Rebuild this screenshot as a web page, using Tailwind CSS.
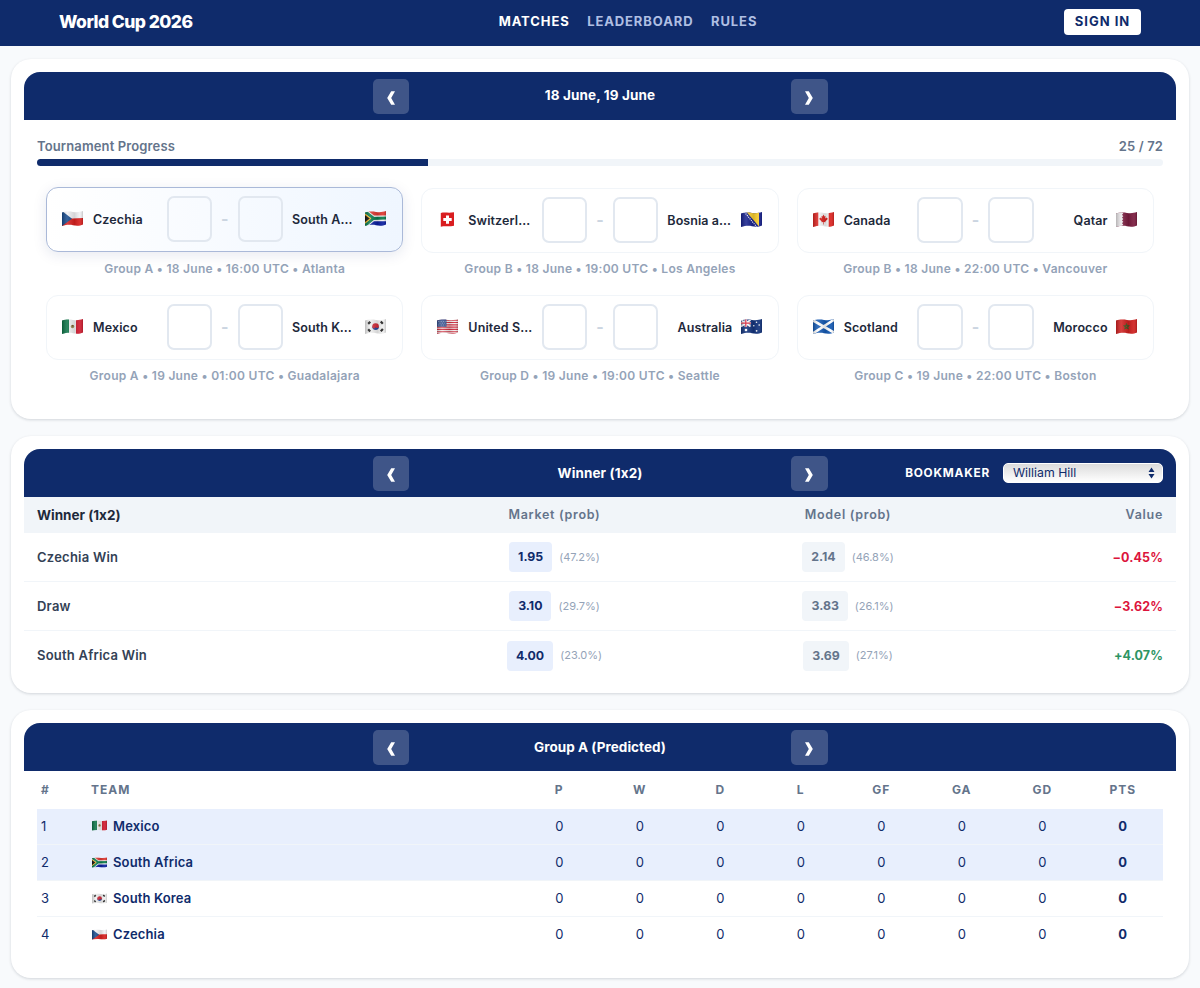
<!DOCTYPE html>
<html lang="en">
<head>
    <meta charset="utf-8"/>
    <meta content="width=device-width, initial-scale=1.0" name="viewport"/>
    <title>World Cup 2026</title>
    <script src="https://cdn.jsdelivr.net/npm/@tailwindcss/browser@4"></script>
</head>
<body class="bg-[#f8fafc] text-[#0f2b6b] font-['Inter',sans-serif] [font-feature-settings:'calt'_0] h-[988px] overflow-hidden">
    <!-- Flags and icons -->
    <svg class="absolute w-0 h-0">
        <defs>
            <clipPath id="wave"><path d="M0 1.600C4 .2 7 .3 11 .9S18 1 21 0V13.400C18 14.800 15 15 11 14.200S4 14 0 15Z"/></clipPath>
            <linearGradient id="shade">
                <stop offset="0" stop-color="#000" stop-opacity=".22"/>
                <stop offset=".25" stop-color="#fff" stop-opacity=".14"/>
                <stop offset=".6" stop-color="#000" stop-opacity=".12"/>
                <stop offset=".85" stop-color="#fff" stop-opacity=".08"/>
                <stop offset="1" stop-color="#000" stop-opacity=".18"/>
            </linearGradient>
        </defs>
        <symbol id="cz" viewBox="0 0 21 15"><g clip-path="url(#wave)"><path fill="#f1f1f4" d="M0 0h21v8H0z"/><path fill="#d8201f" d="M0 8c8 0 13-1 21-1v8H0z"/><path fill="#174a8c" d="M0 0l10 7.8L0 15z"/><path fill="url(#shade)" d="M0 0h21v15H0z"/></g></symbol>
        <symbol id="za" viewBox="0 0 21 15"><g clip-path="url(#wave)"><path fill="#f4f4f4" d="M0 0h21v15H0z"/><path fill="#de3831" d="M3 0h18v4.4H9z"/><path fill="#0a1fa0" d="M3 15h18v-4.8H9z"/><path fill="none" stroke="#087a4b" stroke-width="3" d="M0 .5l8.5 6.8L0 14.500M8 7.400L21 7"/><path fill="#ffb612" d="M0 2.800l6.300 4.700L0 12.400z"/><path fill="#111" d="M0 4.200l4.800 3.300L0 11z"/><path fill="url(#shade)" d="M0 0h21v15H0z"/></g></symbol>
        <symbol id="mx" viewBox="0 0 21 15"><g clip-path="url(#wave)"><path fill="#f2f2f2" d="M0 0h21v15H0z"/><path fill="#0b7346" d="M0 0h7v15H0z"/><path fill="#d01c30" d="M14 0h7v15h-7z"/><circle cx="10.5" cy="7.5" r="1.7" fill="#9a8a55"/><circle cx="10.7" cy="6.8" r=".8" fill="#6f4b24"/><path fill="url(#shade)" d="M0 0h21v15H0z"/></g></symbol>
        <symbol id="kr" viewBox="0 0 21 15"><g clip-path="url(#wave)"><path fill="#f1f1f1" d="M0 0h21v15H0z"/><path fill="#24479c" d="M7.200 7.500a3.400 3.400 0 0 0 6.800 0z"/><path fill="#d22e3c" d="M7.200 8a3.400 3.400 0 0 1 6.800-.5 1.800 1.800 0 0 1-3.300.6A1.800 1.800 0 0 1 7.200 8z"/><path stroke="#222" stroke-width="2.2" d="M3.200 4.900l2.100-2.100M15.800 2.500l2 2.200M3.200 10.200l2 2.200M15.800 12.300l2.100-2.200"/><path fill="url(#shade)" d="M0 0h21v15H0z"/></g></symbol>
        <symbol id="ch" viewBox="0 0 21 15"><path fill="#d91d20" d="M3.800.9C8 0 12 1.300 17 .2v13.500C12 15 8 13.700 3.800 14.800z"/><path fill="#fff" d="M9 3.400h3v2.700h2.700v3H12v2.700H9V9.100H6.300v-3H9z"/></symbol>
        <symbol id="ba" viewBox="0 0 21 15"><g clip-path="url(#wave)"><path fill="#16208c" d="M0 0h21v15H0z"/><path fill="#f7cd2e" d="M5.500 0H18v14.500z"/><path stroke="#fff" stroke-width="1.1" stroke-dasharray="1.1 1" d="M3.300 0l12.500 15"/><path fill="url(#shade)" d="M0 0h21v15H0z"/></g></symbol>
        <symbol id="ca" viewBox="0 0 21 15"><g clip-path="url(#wave)"><path fill="#f6f6f6" d="M0 0h21v15H0z"/><path fill="#dc2420" d="M0 0h5.300v15H0zM15.700 0H21v15h-5.300zM10.500 2.600l1 1.800 1-.4-.3 2.400 1.700-1 .9 1.600-2.500 2.400.2.800-1.700-.1v2.300h-.6v-2.300l-1.700.1.200-.8-2.500-2.400.9-1.600 1.700 1L8.500 4l1 .4z"/><path fill="url(#shade)" d="M0 0h21v15H0z"/></g></symbol>
        <symbol id="qa" viewBox="0 0 21 15"><g clip-path="url(#wave)"><path fill="#7b1c3f" d="M0 0h21v15H0z"/><path fill="#e9e6e8" d="M0 0h6l1.300 1.400L6 2.800l1.300 1.400L6 5.600 7.300 7 6 8.400l1.300 1.400L6 11.200l1.300 1.400L6 14l1 1H0z"/><path fill="url(#shade)" d="M0 0h21v15H0z"/></g></symbol>
        <symbol id="us" viewBox="0 0 21 15"><g clip-path="url(#wave)"><path fill="#f4eded" d="M0 0h21v15H0z"/><path stroke="#cf2b3d" stroke-width="1.15" d="M0 1.200h21M0 3.500h21M0 5.800h21M0 8.100h21M0 10.400h21M0 12.700h21M0 14.700h21"/><path fill="#35508f" d="M0 0h9.500v7.800H0z"/><path stroke="#c5cfe4" stroke-width=".7" stroke-dasharray=".7 1" d="M1 2.500h8M1.800 4.200h7M1 6h8"/><path fill="url(#shade)" d="M0 0h21v15H0z"/></g></symbol>
        <symbol id="au" viewBox="0 0 21 15"><g clip-path="url(#wave)"><path fill="#12337c" d="M0 0h21v15H0z"/><path stroke="#fff" stroke-width="1.8" d="M0 1l9.500 6.500M9.500 1L0 7.500"/><path stroke="#fff" stroke-width="2.6" d="M4.800 0v7.800M0 4.200h9.800"/><path stroke="#d9243a" stroke-width="1.3" d="M4.800 0v7.800M0 4.200h9.800"/><g fill="#fff"><circle cx="5" cy="11" r="1.3"/><circle cx="15.5" cy="3.2" r=".8"/><circle cx="12.8" cy="6.8" r=".8"/><circle cx="18.2" cy="6" r=".8"/><circle cx="15.6" cy="11.8" r=".9"/></g><path fill="url(#shade)" d="M0 0h21v15H0z"/></g></symbol>
        <symbol id="sc" viewBox="0 0 21 15"><g clip-path="url(#wave)"><path fill="#1459b3" d="M0 0h21v15H0z"/><path stroke="#fff" stroke-width="2.6" d="M0 1.500l21 12M21 .8L0 14.300"/><path fill="url(#shade)" d="M0 0h21v15H0z"/></g></symbol>
        <symbol id="ma" viewBox="0 0 21 15"><g clip-path="url(#wave)"><path fill="#d0201f" d="M0 0h21v15H0z"/><path fill="none" stroke="#3c5c22" stroke-width=".9" d="M10.500 4.600l1.800 5.500-4.700-3.400h5.800l-4.700 3.400z"/><path fill="url(#shade)" d="M0 0h21v15H0z"/></g></symbol>
        <symbol id="prev" viewBox="0 0 8 14"><path d="M4.200.3H8L4.200 7 8 13.700H4.200L.2 7z"/></symbol>
        <symbol id="next" viewBox="0 0 8 14"><path d="M3.800.3H0L3.800 7 0 13.700h3.800L7.800 7z"/></symbol>
    </svg>

    <header class="bg-[#0f2b6b] h-[45.5px] pl-[59px] pr-[59px] grid grid-cols-[1fr_auto_1fr] items-center text-white">
        <h1 class="text-[17.5px] font-extrabold tracking-[-0.55px] -translate-y-px">World Cup 2026</h1>
        <nav class="-translate-y-px translate-x-[28px]">
            <ul class="flex gap-[17.5px] text-[13px] font-bold tracking-[0.9px] text-[#afbfe3]">
                <li><a class="text-white" href="#">MATCHES</a></li>
                <li><a href="#">LEADERBOARD</a></li>
                <li><a href="#">RULES</a></li>
            </ul>
        </nav>
        <button class="justify-self-end bg-white text-[#0f2b6b] rounded h-[26px] w-[77px] -translate-y-px text-[13px] font-bold tracking-[1px]">SIGN IN</button>
    </header>

    <main class="px-[11px] pt-[13.5px] flex flex-col gap-[17px]">
        <!-- Matches -->
        <section class="bg-white rounded-[20px] p-[13px] h-[360px] shadow-[0_1px_3px_rgba(15,23,42,0.16)]">
            <div class="bg-[#0f2b6b] text-white rounded-t-2xl h-12 flex items-center justify-center">
                <button class="w-[36.5px] h-[35px] rounded-[5px] bg-white/20 flex items-center justify-center"><svg class="w-2 h-3.5 mt-[3px] fill-white"><use href="#prev"/></svg></button>
                <h2 class="w-[382px] -mt-px text-center text-[13.5px] font-bold tracking-[0.12px]">18 June, 19 June</h2>
                <button class="w-[36.5px] h-[35px] rounded-[5px] bg-white/20 flex items-center justify-center"><svg class="w-2 h-3.5 mt-[3px] fill-white"><use href="#next"/></svg></button>
            </div>
            <div class="px-[13px] pt-[16px]">
                <div class="flex justify-between text-[13px] leading-5 font-semibold tracking-[0.13px] text-[#64748b]">
                    <span>Tournament Progress</span>
                    <span>25 / 72</span>
                </div>
                <div class="mt-[3px] h-[7px] rounded-full bg-[#f1f5f9] overflow-hidden">
                    <div class="h-full bg-[#0f2b6b]" style="width: 34.72%"></div>
                </div>
                <div class="mt-[21.5px] grid grid-cols-3">
                    <div class="h-[107px] px-[9px]">
                        <div class="h-[65px] -translate-y-px rounded-xl border border-[#aab9d8] bg-linear-to-r from-white to-[#eff6ff] shadow-[0_3px_14px_rgba(15,43,107,0.10)] pl-[15px] pr-4 flex items-center">
                            <svg class="-mt-0.5 w-[21px] h-[15px]"><use href="#cz"/></svg>
                            <span class="ml-2.5 w-[66px] pt-0.5 truncate text-[12.5px] font-semibold tracking-[0.12px] text-[#1e293b]">Czechia</span>
                            <span class="ml-[7.5px] size-[45.5px] rounded-[7px] border-2 border-[#e2e8f0]"></span>
                            <span class="w-[25.5px] text-center text-base font-bold text-[#cbd5e1]">-</span>
                            <span class="mr-[9px] size-[45.5px] rounded-[7px] border-2 border-[#e2e8f0]"></span>
                            <span class="w-[64.5px] pt-0.5 truncate text-right text-[12.5px] font-semibold tracking-[0.12px] text-[#1e293b]">South Africa</span>
                            <svg class="-mt-0.5 ml-auto w-[21px] h-[15px]"><use href="#za"/></svg>
                        </div>
                        <p class="mt-[7px] text-center text-xs leading-[18px] font-semibold tracking-[0.28px] text-[#94a3b8]">Group A • 18 June • 16:00 UTC • Atlanta</p>
                    </div>
                    <div class="h-[107px] px-[9px]">
                        <div class="h-[65px] rounded-xl border border-[#f1f5f9] pl-[15px] pr-4 flex items-center">
                            <svg class="-mt-0.5 w-[21px] h-[15px]"><use href="#ch"/></svg>
                            <span class="ml-2.5 w-[66px] pt-0.5 truncate text-[12.5px] font-semibold tracking-[0.12px] text-[#1e293b]">Switzerland</span>
                            <span class="ml-[7.5px] size-[45.5px] rounded-[7px] border-2 border-[#e2e8f0]"></span>
                            <span class="w-[25.5px] text-center text-base font-bold text-[#cbd5e1]">-</span>
                            <span class="mr-[9px] size-[45.5px] rounded-[7px] border-2 border-[#e2e8f0]"></span>
                            <span class="w-[65px] pt-0.5 truncate text-right text-[12.5px] font-semibold tracking-[0.08px] text-[#1e293b]">Bosnia and Herzegovina</span>
                            <svg class="-mt-0.5 ml-auto w-[21px] h-[15px]"><use href="#ba"/></svg>
                        </div>
                        <p class="mt-[7px] text-center text-xs leading-[18px] font-semibold tracking-[0.28px] text-[#94a3b8]">Group B • 18 June • 19:00 UTC • Los Angeles</p>
                    </div>
                    <div class="h-[107px] px-[9px]">
                        <div class="h-[65px] rounded-xl border border-[#f1f5f9] pl-[15px] pr-4 flex items-center">
                            <svg class="-mt-0.5 w-[21px] h-[15px]"><use href="#ca"/></svg>
                            <span class="ml-2.5 w-[66px] pt-0.5 truncate text-[12.5px] font-semibold tracking-[0.12px] text-[#1e293b]">Canada</span>
                            <span class="ml-[7.5px] size-[45.5px] rounded-[7px] border-2 border-[#e2e8f0]"></span>
                            <span class="w-[25.5px] text-center text-base font-bold text-[#cbd5e1]">-</span>
                            <span class="mr-[9px] size-[45.5px] rounded-[7px] border-2 border-[#e2e8f0]"></span>
                            <span class="w-[65px] pt-0.5 truncate text-right text-[12.5px] font-semibold tracking-[0.12px] text-[#1e293b]">Qatar</span>
                            <svg class="-mt-0.5 ml-auto w-[21px] h-[15px]"><use href="#qa"/></svg>
                        </div>
                        <p class="mt-[7px] text-center text-xs leading-[18px] font-semibold tracking-[0.28px] text-[#94a3b8]">Group B • 18 June • 22:00 UTC • Vancouver</p>
                    </div>
                    <div class="h-[107px] px-[9px]">
                        <div class="h-[65px] rounded-xl border border-[#f1f5f9] pl-[15px] pr-4 flex items-center">
                            <svg class="-mt-0.5 w-[21px] h-[15px]"><use href="#mx"/></svg>
                            <span class="ml-2.5 w-[66px] pt-0.5 truncate text-[12.5px] font-semibold tracking-[0.12px] text-[#1e293b]">Mexico</span>
                            <span class="ml-[7.5px] size-[45.5px] rounded-[7px] border-2 border-[#e2e8f0]"></span>
                            <span class="w-[25.5px] text-center text-base font-bold text-[#cbd5e1]">-</span>
                            <span class="mr-[9px] size-[45.5px] rounded-[7px] border-2 border-[#e2e8f0]"></span>
                            <span class="w-[65px] pt-0.5 truncate text-right text-[12.5px] font-semibold tracking-[0.12px] text-[#1e293b]">South Korea</span>
                            <svg class="-mt-0.5 ml-auto w-[21px] h-[15px]"><use href="#kr"/></svg>
                        </div>
                        <p class="mt-[7px] text-center text-xs leading-[18px] font-semibold tracking-[0.28px] text-[#94a3b8]">Group A • 19 June • 01:00 UTC • Guadalajara</p>
                    </div>
                    <div class="h-[107px] px-[9px]">
                        <div class="h-[65px] rounded-xl border border-[#f1f5f9] pl-[15px] pr-4 flex items-center">
                            <svg class="-mt-0.5 w-[21px] h-[15px]"><use href="#us"/></svg>
                            <span class="ml-2.5 w-[66px] pt-0.5 truncate text-[12.5px] font-semibold tracking-[0.12px] text-[#1e293b]">United States</span>
                            <span class="ml-[7.5px] size-[45.5px] rounded-[7px] border-2 border-[#e2e8f0]"></span>
                            <span class="w-[25.5px] text-center text-base font-bold text-[#cbd5e1]">-</span>
                            <span class="mr-[9px] size-[45.5px] rounded-[7px] border-2 border-[#e2e8f0]"></span>
                            <span class="w-[65px] pt-0.5 truncate text-right text-[12.5px] font-semibold tracking-[0.12px] text-[#1e293b]">Australia</span>
                            <svg class="-mt-0.5 ml-auto w-[21px] h-[15px]"><use href="#au"/></svg>
                        </div>
                        <p class="mt-[7px] text-center text-xs leading-[18px] font-semibold tracking-[0.28px] text-[#94a3b8]">Group D • 19 June • 19:00 UTC • Seattle</p>
                    </div>
                    <div class="h-[107px] px-[9px]">
                        <div class="h-[65px] rounded-xl border border-[#f1f5f9] pl-[15px] pr-4 flex items-center">
                            <svg class="-mt-0.5 w-[21px] h-[15px]"><use href="#sc"/></svg>
                            <span class="ml-2.5 w-[66px] pt-0.5 truncate text-[12.5px] font-semibold tracking-[0.12px] text-[#1e293b]">Scotland</span>
                            <span class="ml-[7.5px] size-[45.5px] rounded-[7px] border-2 border-[#e2e8f0]"></span>
                            <span class="w-[25.5px] text-center text-base font-bold text-[#cbd5e1]">-</span>
                            <span class="mr-[9px] size-[45.5px] rounded-[7px] border-2 border-[#e2e8f0]"></span>
                            <span class="w-[65px] pt-0.5 truncate text-right text-[12.5px] font-semibold tracking-[0.12px] text-[#1e293b]">Morocco</span>
                            <svg class="-mt-0.5 ml-auto w-[21px] h-[15px]"><use href="#ma"/></svg>
                        </div>
                        <p class="mt-[7px] text-center text-xs leading-[18px] font-semibold tracking-[0.28px] text-[#94a3b8]">Group C • 19 June • 22:00 UTC • Boston</p>
                    </div>
                </div>
            </div>
        </section>

        <!-- Odds -->
        <section class="bg-white rounded-[20px] p-[13px] h-[257px] shadow-[0_1px_3px_rgba(15,23,42,0.16)]">
            <div class="bg-[#0f2b6b] text-white rounded-t-2xl h-12 px-[13px] grid grid-cols-[1fr_auto_1fr] items-center">
                <span></span>
                <div class="flex items-center">
                    <button class="w-[36.5px] h-[35px] rounded-[5px] bg-white/20 flex items-center justify-center"><svg class="w-2 h-3.5 mt-[3px] fill-white"><use href="#prev"/></svg></button>
                    <h2 class="w-[382px] text-center text-[13.5px] font-bold tracking-[0.12px]">Winner (1x2)</h2>
                    <button class="w-[36.5px] h-[35px] rounded-[5px] bg-white/20 flex items-center justify-center"><svg class="w-2 h-3.5 mt-[3px] fill-white"><use href="#next"/></svg></button>
                </div>
                <div class="flex items-center justify-end gap-[13px]">
                    <span class="pt-0.5 text-[11.8px] font-bold tracking-[0.8px]">BOOKMAKER</span>
                    <button class="w-[160px] h-5 pl-[9px] pr-[7px] rounded-[5px] border border-white bg-linear-to-b from-[#dcdcdc] to-white flex items-center justify-between text-[12.3px] text-[#0f2b6b]">
                        <span>William Hill</span>
                        <svg class="w-[7px] h-3 fill-[#0f2b6b]" viewBox="0 0 7 12"><path d="M3.500.5L6.500 5h-6zM3.500 11.500L.5 7h6z"/></svg>
                    </button>
                </div>
            </div>
            <div class="h-9 px-[13px] bg-[#f1f5f9] grid grid-cols-[371px_293px_294px_1fr] items-center text-center text-[12.5px] font-semibold tracking-[0.7px] text-[#64748b]">
                <span class="text-left text-[13.5px] font-bold tracking-normal text-[#1e293b]">Winner (1x2)</span>
                <span>Market (prob)</span>
                <span>Model (prob)</span>
                <span class="text-right">Value</span>
            </div>
            <div class="h-[49px] px-[13px] border-b border-[#f1f5f9] grid grid-cols-[371px_293px_294px_1fr] items-center">
                <span class="pt-0.5 text-[13px] font-semibold tracking-[0.23px] text-[#334155]">Czechia Win</span>
                <span class="flex items-center justify-center gap-[7px] text-[11px] text-[#94a3b8]"><b class="rounded bg-[#e8effd] px-[9px] leading-[30px] text-[12.3px] font-bold text-[#0f2b6b]">1.95</b>(47.2%)</span>
                <span class="flex items-center justify-center gap-[7px] text-[11px] text-[#94a3b8]"><b class="rounded bg-[#f1f5f9] px-[9px] leading-[30px] text-[12.3px] font-bold text-[#64748b]">2.14</b>(46.8%)</span>
                <span class="pt-0.5 text-right text-[12.5px] font-bold tracking-[0.1px] text-[#dc143c]">−0.45%</span>
            </div>
            <div class="h-[49px] px-[13px] border-b border-[#f1f5f9] grid grid-cols-[371px_293px_294px_1fr] items-center">
                <span class="pt-0.5 text-[13px] font-semibold tracking-[0.23px] text-[#334155]">Draw</span>
                <span class="flex items-center justify-center gap-[7px] text-[11px] text-[#94a3b8]"><b class="rounded bg-[#e8effd] px-[9px] leading-[30px] text-[12.3px] font-bold text-[#0f2b6b]">3.10</b>(29.7%)</span>
                <span class="flex items-center justify-center gap-[7px] text-[11px] text-[#94a3b8]"><b class="rounded bg-[#f1f5f9] px-[9px] leading-[30px] text-[12.3px] font-bold text-[#64748b]">3.83</b>(26.1%)</span>
                <span class="pt-0.5 text-right text-[12.5px] font-bold tracking-[0.1px] text-[#dc143c]">−3.62%</span>
            </div>
            <div class="h-[49px] px-[13px] grid grid-cols-[371px_293px_294px_1fr] items-center">
                <span class="text-[13px] font-semibold tracking-[0.23px] text-[#334155]">South Africa Win</span>
                <span class="flex items-center justify-center gap-[7px] text-[11px] text-[#94a3b8]"><b class="rounded bg-[#e8effd] px-[9px] leading-[30px] text-[12.3px] font-bold text-[#0f2b6b]">4.00</b>(23.0%)</span>
                <span class="flex items-center justify-center gap-[7px] text-[11px] text-[#94a3b8]"><b class="rounded bg-[#f1f5f9] px-[9px] leading-[30px] text-[12.3px] font-bold text-[#64748b]">3.69</b>(27.1%)</span>
                <span class="pt-0.5 text-right text-[12.5px] font-bold tracking-[0.1px] text-[#2e9463]">+4.07%</span>
            </div>
        </section>

        <!-- Group table -->
        <section class="bg-white rounded-[20px] p-[13px] h-[268px] shadow-[0_1px_3px_rgba(15,23,42,0.16)]">
            <div class="bg-[#0f2b6b] text-white rounded-t-2xl h-12 flex items-center justify-center">
                <button class="w-[36.5px] h-[35px] rounded-[5px] bg-white/20 flex items-center justify-center"><svg class="w-2 h-3.5 mt-[3px] fill-white"><use href="#prev"/></svg></button>
                <h2 class="w-[382px] text-center text-[13.5px] font-bold tracking-[0.05px]">Group A (Predicted)</h2>
                <button class="w-[36.5px] h-[35px] rounded-[5px] bg-white/20 flex items-center justify-center"><svg class="w-2 h-3.5 mt-[3px] fill-white"><use href="#next"/></svg></button>
            </div>
            <div class="px-[13px]">
                <table class="w-full table-fixed text-center text-[13px]">
                    <thead class="h-[37.5px] text-xs text-[#64748b] tracking-[1px]">
                        <tr>
                            <th class="w-[50px] pl-1 text-left">#</th>
                            <th class="w-[432px] pl-1 text-left">TEAM</th>
                            <th>P</th><th>W</th><th>D</th><th>L</th><th>GF</th><th>GA</th><th>GD</th><th>PTS</th>
                        </tr>
                    </thead>
                    <tbody>
                        <tr class="h-9 bg-[#e8effd] border-b border-[#f1f5f9]">
                            <td class="pl-1 text-left">1</td>
                            <td class="pl-[5px] text-left font-semibold tracking-[0.14px]"><div class="flex items-center gap-1.5"><svg class="-mt-px w-[15px] h-[11px]"><use href="#mx"/></svg>Mexico</div></td>
                            <td>0</td><td>0</td><td>0</td><td>0</td><td>0</td><td>0</td><td>0</td><td class="font-bold">0</td>
                        </tr>
                        <tr class="h-9 bg-[#e8effd] border-b border-[#f1f5f9]">
                            <td class="pl-1 text-left">2</td>
                            <td class="pl-[5px] text-left font-semibold tracking-[0.14px]"><div class="flex items-center gap-1.5"><svg class="-mt-px w-[15px] h-[11px]"><use href="#za"/></svg>South Africa</div></td>
                            <td>0</td><td>0</td><td>0</td><td>0</td><td>0</td><td>0</td><td>0</td><td class="font-bold">0</td>
                        </tr>
                        <tr class="h-9 border-b border-[#f1f5f9]">
                            <td class="pl-1 text-left">3</td>
                            <td class="pl-[5px] text-left font-semibold tracking-[0.14px]"><div class="flex items-center gap-1.5"><svg class="-mt-px w-[15px] h-[11px]"><use href="#kr"/></svg>South Korea</div></td>
                            <td>0</td><td>0</td><td>0</td><td>0</td><td>0</td><td>0</td><td>0</td><td class="font-bold">0</td>
                        </tr>
                        <tr class="h-9">
                            <td class="pl-1 text-left">4</td>
                            <td class="pl-[5px] text-left font-semibold tracking-[0.14px]"><div class="flex items-center gap-1.5"><svg class="-mt-px w-[15px] h-[11px]"><use href="#cz"/></svg>Czechia</div></td>
                            <td>0</td><td>0</td><td>0</td><td>0</td><td>0</td><td>0</td><td>0</td><td class="font-bold">0</td>
                        </tr>
                    </tbody>
                </table>
            </div>
        </section>
    </main>
</body>
</html>
